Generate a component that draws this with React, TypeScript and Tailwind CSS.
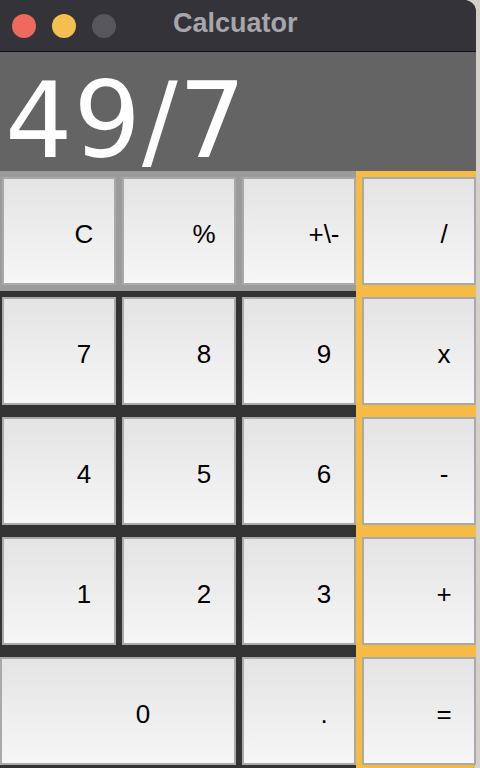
import React from "react";

const Btn = ({ label, w = "w-[114px]" }: { label: string; w?: string }) => (
  <div
    className={`${w} h-[108px] shrink-0 flex items-center justify-center pl-[50px] pt-[5px] border-2 border-[#a9a9a9] bg-linear-to-b from-[#e4e4e4] to-[#f6f6f6] text-black text-[26px] leading-none`}
    style={{ fontFamily: '"Liberation Sans", Arial, sans-serif' }}
  >
    {label}
  </div>
);

const Row = ({
  labels,
  op,
  first,
  zero,
}: {
  labels: string[];
  op: string;
  first?: boolean;
  zero?: boolean;
}) => (
  <div className="flex h-[120px] shrink-0">
    <div
      className={`flex w-[356px] py-[6px] gap-[6px] ${zero ? "pl-0" : "pl-[2px]"} ${
        first ? "bg-[#9b9b9b]" : "bg-[#333333]"
      }`}
    >
      {zero ? (
        <>
          <Btn label="0" w="w-[236px]" />
          <Btn label="." />
        </>
      ) : (
        labels.map((l) => <Btn key={l} label={l} />)
      )}
    </div>
    <div className="w-[120px] bg-[#f5bb45] pl-[6px] py-[6px]">
      <Btn label={op} />
    </div>
  </div>
);

export default function App() {
  return (
    <div className="w-[480px] h-[768px] overflow-hidden bg-[#d4d1ca]">
      <div className="w-[476px] h-[772px] flex flex-col overflow-hidden rounded-tr-[12px] rounded-br-[12px] bg-[#343339]">
        <div className="h-[52px] shrink-0 relative flex items-center bg-[#343339] border-b border-[#111]">
          <div className="flex items-center gap-[16px] pl-[12px]">
            <div className="w-[24px] h-[24px] rounded-full bg-[#ee6a5f]" />
            <div className="w-[24px] h-[24px] rounded-full bg-[#f5bf4f]" />
            <div className="w-[24px] h-[24px] rounded-full bg-[#57565c]" />
          </div>
          <div
            className="absolute left-[173px] top-[5px] text-[27px] font-bold text-[#a7a6ab] leading-[36px]"
            style={{ fontFamily: '"Liberation Sans", Arial, sans-serif' }}
          >
            Calcuator
          </div>
        </div>
        <div className="h-[119px] shrink-0 bg-[#646464] pt-[16px] pl-[5px]">
          <div
            className="text-white text-[106px] leading-none tracking-[1px]"
            style={{ fontFamily: '"DejaVu Sans", sans-serif' }}
          >
            49/7
          </div>
        </div>
        <Row first labels={["C", "%", "+\\-"]} op="/" />
        <Row labels={["7", "8", "9"]} op="x" />
        <Row labels={["4", "5", "6"]} op="-" />
        <Row labels={["1", "2", "3"]} op="+" />
        <Row zero labels={[]} op="=" />
      </div>
    </div>
  );
}
